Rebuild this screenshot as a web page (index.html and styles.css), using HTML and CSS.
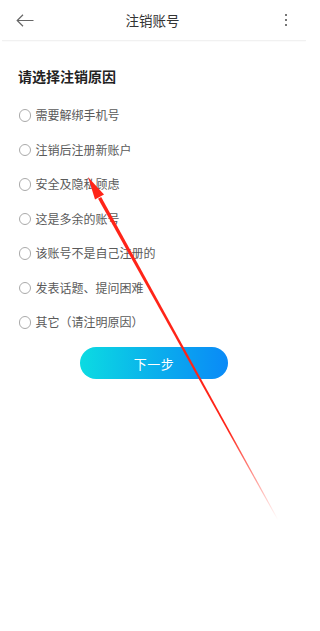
FILE: index.html
```html
<!DOCTYPE html>
<html lang="zh-CN">
<head>
<meta charset="utf-8">
<title>注销账号</title>
<link rel="stylesheet" href="styles.css">
</head>
<body>
<div class="page">
  <header class="topbar">
    <svg class="back" width="18" height="13" viewBox="0 0 18 13">
      <path d="M1 6.5 H17.5 M7 0.8 L1.2 6.5 L7 12.2" fill="none" stroke="#666" stroke-width="1.2"/>
    </svg>
    <div class="title">注销账号</div>
    <div class="more"><span></span><span></span><span></span></div>
  </header>
  <div class="divider"></div>
  <main class="content">
    <h2 class="heading">请选择注销原因</h2>
    <ul class="options">
      <li class="option"><span class="radio"></span><span class="label">需要解绑手机号</span></li>
      <li class="option"><span class="radio"></span><span class="label">注销后注册新账户</span></li>
      <li class="option"><span class="radio"></span><span class="label">安全及隐私顾虑</span></li>
      <li class="option"><span class="radio"></span><span class="label">这是多余的账号</span></li>
      <li class="option"><span class="radio"></span><span class="label">该账号不是自己注册的</span></li>
      <li class="option"><span class="radio"></span><span class="label">发表话题、提问困难</span></li>
      <li class="option"><span class="radio"></span><span class="label">其它（请注明原因）</span></li>
    </ul>
    <div class="actions"><button class="next">下一步</button></div>
  </main>
  <svg class="annotation" width="315" height="631" viewBox="0 0 315 631">
    <defs>
      <linearGradient id="fade" gradientUnits="userSpaceOnUse" x1="99" y1="198" x2="278" y2="520">
        <stop offset="0" stop-color="#ff2418" stop-opacity="1"/>
        <stop offset="0.72" stop-color="#ff2418" stop-opacity="1"/>
        <stop offset="1" stop-color="#ff2418" stop-opacity="0"/>
      </linearGradient>
    </defs>
    <polygon points="101.2,197 98.1,198.8 277.6,520.2 278.4,519.8" fill="url(#fade)"/>
    <polygon points="88,177 104,194.5 95,199.5" fill="#ff2418"/>
  </svg>
</div>
</body>
</html>
```
FILE: styles.css
```css
* { box-sizing: border-box; }
html, body { margin: 0; padding: 0; background: #fff; }
body {
  font-family: "Noto Sans CJK SC", "Noto Sans", sans-serif;
  color: #333;
}
.page {
  position: relative;
  width: 315px;
  height: 631px;
  overflow: hidden;
}
.topbar {
  width: 308px;
  height: 40px;
  display: grid;
  grid-template-columns: 1fr auto 1fr;
  align-items: center;
  padding: 0 19px 0 16px;
}
.back { display: block; justify-self: start; }
.title {
  font-size: 13.5px;
  color: #333;
  line-height: 20px;
}
.more {
  justify-self: end;
  width: 6px;
  display: flex;
  flex-direction: column;
  align-items: center;
  gap: 3px;
}
.more span {
  width: 2px;
  height: 2px;
  background: #777;
  display: block;
}
.divider {
  margin: 0 9px 0 2px;
  height: 1px;
  background: #f1f1f1;
  box-shadow: 0 1px 1px rgba(0,0,0,0.02);
}
.content {
  width: 308px;
  padding: 25px 0 0 18px;
}
.heading {
  margin: 0;
  font-size: 14px;
  font-weight: bold;
  line-height: 20px;
  color: #222;
}
.options {
  list-style: none;
  margin: 12px 0 0;
  padding: 0;
}
.option {
  height: 34.5px;
  display: flex;
  align-items: center;
}
.radio {
  width: 12.5px;
  height: 12.5px;
  border: 1px solid #aaa;
  border-radius: 50%;
  margin-left: 0.5px;
  flex: none;
}
.label {
  margin-left: 4.5px;
  font-size: 12px;
  color: #5a5a5a;
  line-height: 16px;
}
.actions {
  margin-top: 7.5px;
  padding-left: 62px;
}
.next {
  width: 148px;
  height: 32px;
  border: none;
  border-radius: 16px;
  background: linear-gradient(90deg, #0cdbe2 0%, #0ab0ec 50%, #0a8af7 100%);
  color: #fff;
  font-family: "Noto Sans CJK SC", "Noto Sans", sans-serif;
  font-size: 13px;
  padding: 0;
  letter-spacing: 0.5px;
}
.annotation {
  position: absolute;
  left: 0;
  top: 0;
  pointer-events: none;
}
```
